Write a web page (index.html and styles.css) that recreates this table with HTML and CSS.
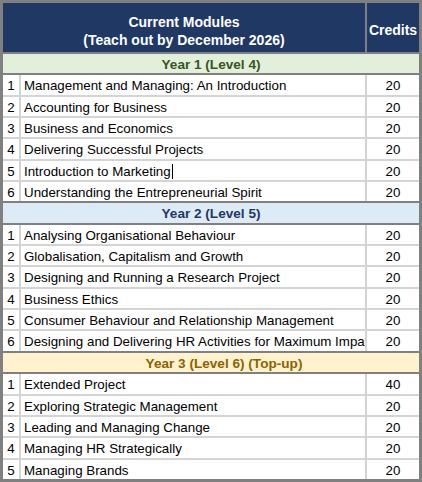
FILE: index.html
```html
<!DOCTYPE html>
<html lang="en">
<head>
<meta charset="utf-8">
<title>Current Modules</title>
<link rel="stylesheet" href="styles.css">
</head>
<body>
<div class="sheet">
  <div class="head">
    <div class="head-title"><span>Current Modules</span><span>(Teach out by December 2026)</span></div>
    <div class="head-credits">Credits</div>
  </div>

  <div class="band band-y1">Year 1 (Level 4)</div>
  <div class="row"><div class="num">1</div><div class="name">Management and Managing: An Introduction</div><div class="cr">20</div></div>
  <div class="row"><div class="num">2</div><div class="name">Accounting for Business</div><div class="cr">20</div></div>
  <div class="row"><div class="num">3</div><div class="name">Business and Economics</div><div class="cr">20</div></div>
  <div class="row"><div class="num">4</div><div class="name">Delivering Successful Projects</div><div class="cr">20</div></div>
  <div class="row"><div class="num">5</div><div class="name">Introduction to Marketing<span class="caret"></span></div><div class="cr">20</div></div>
  <div class="row"><div class="num">6</div><div class="name">Understanding the Entrepreneurial Spirit</div><div class="cr">20</div></div>

  <div class="band band-y2">Year 2 (Level 5)</div>
  <div class="row"><div class="num">1</div><div class="name">Analysing Organisational Behaviour</div><div class="cr">20</div></div>
  <div class="row"><div class="num">2</div><div class="name">Globalisation, Capitalism and Growth</div><div class="cr">20</div></div>
  <div class="row"><div class="num">3</div><div class="name">Designing and Running a Research Project</div><div class="cr">20</div></div>
  <div class="row"><div class="num">4</div><div class="name">Business Ethics</div><div class="cr">20</div></div>
  <div class="row"><div class="num">5</div><div class="name">Consumer Behaviour and Relationship Management</div><div class="cr">20</div></div>
  <div class="row"><div class="num">6</div><div class="name">Designing and Delivering HR Activities for Maximum Impact</div><div class="cr">20</div></div>

  <div class="band band-y3">Year 3 (Level 6) (Top-up)</div>
  <div class="row"><div class="num">1</div><div class="name">Extended Project</div><div class="cr">40</div></div>
  <div class="row"><div class="num">2</div><div class="name">Exploring Strategic Management</div><div class="cr">20</div></div>
  <div class="row"><div class="num">3</div><div class="name">Leading and Managing Change</div><div class="cr">20</div></div>
  <div class="row"><div class="num">4</div><div class="name">Managing HR Strategically</div><div class="cr">20</div></div>
  <div class="row"><div class="num">5</div><div class="name">Managing Brands</div><div class="cr">20</div></div>
</div>
</body>
</html>
```
FILE: styles.css
```css
html, body {
  margin: 0;
  padding: 0;
  background: #ffffff;
}

body {
  font-family: "Liberation Sans", Arial, sans-serif;
  font-size: 13.33px;
  color: #000000;
}

.sheet {
  width: 422px;
  height: 482px;
  box-sizing: border-box;
  border: 3px solid #808080;
  display: flex;
  flex-direction: column;
  overflow: hidden;
}

.head {
  display: flex;
  height: 49px;
  background: #1f3864;
  color: #ffffff;
  font-weight: bold;
  font-size: 14px;
  flex: none;
}

.head-title {
  width: 362px;
  border-right: 2px solid #808080;
  display: flex;
  flex-direction: column;
  align-items: center;
  padding-top: 10px;
  line-height: 18px;
}

.head-credits {
  width: 52px;
  display: flex;
  align-items: center;
  justify-content: center;
  padding-top: 4px;
  box-sizing: border-box;
  white-space: nowrap;
}

.band {
  flex: none;
  height: 16.35px;
  line-height: 16.35px;
  padding-top: 3px;
  border-top: 2px solid #808080;
  border-bottom: 2px solid #808080;
  text-align: center;
  font-weight: bold;
  font-size: 13.6px;
}

.band-y1 {
  background: #e2efda;
  color: #375623;
}

.band-y2 {
  background: #ddebf7;
  color: #1f3864;
}

.band-y3 {
  background: #fff2cc;
  color: #8a6204;
  padding-left: 26px;
}

.row {
  flex: none;
  display: flex;
  height: 19.35px;
  border-top: 2px solid #d4d4d4;
}

.band + .row {
  border-top: none;
}

.num,
.name,
.cr {
  box-sizing: border-box;
  padding-top: 3px;
  line-height: 16.35px;
}

.num {
  width: 18px;
  border-right: 2px solid #d4d4d4;
  text-align: center;
  flex: none;
}

.name {
  width: 346px;
  padding-left: 3px;
  border-right: 2px solid #d4d4d4;
  white-space: nowrap;
  overflow: hidden;
  flex: none;
}

.cr {
  width: 52px;
  text-align: center;
  flex: none;
}

.caret {
  display: inline-block;
  width: 1px;
  height: 15px;
  background: #000000;
  vertical-align: -3px;
  margin-left: 1px;
}
```
